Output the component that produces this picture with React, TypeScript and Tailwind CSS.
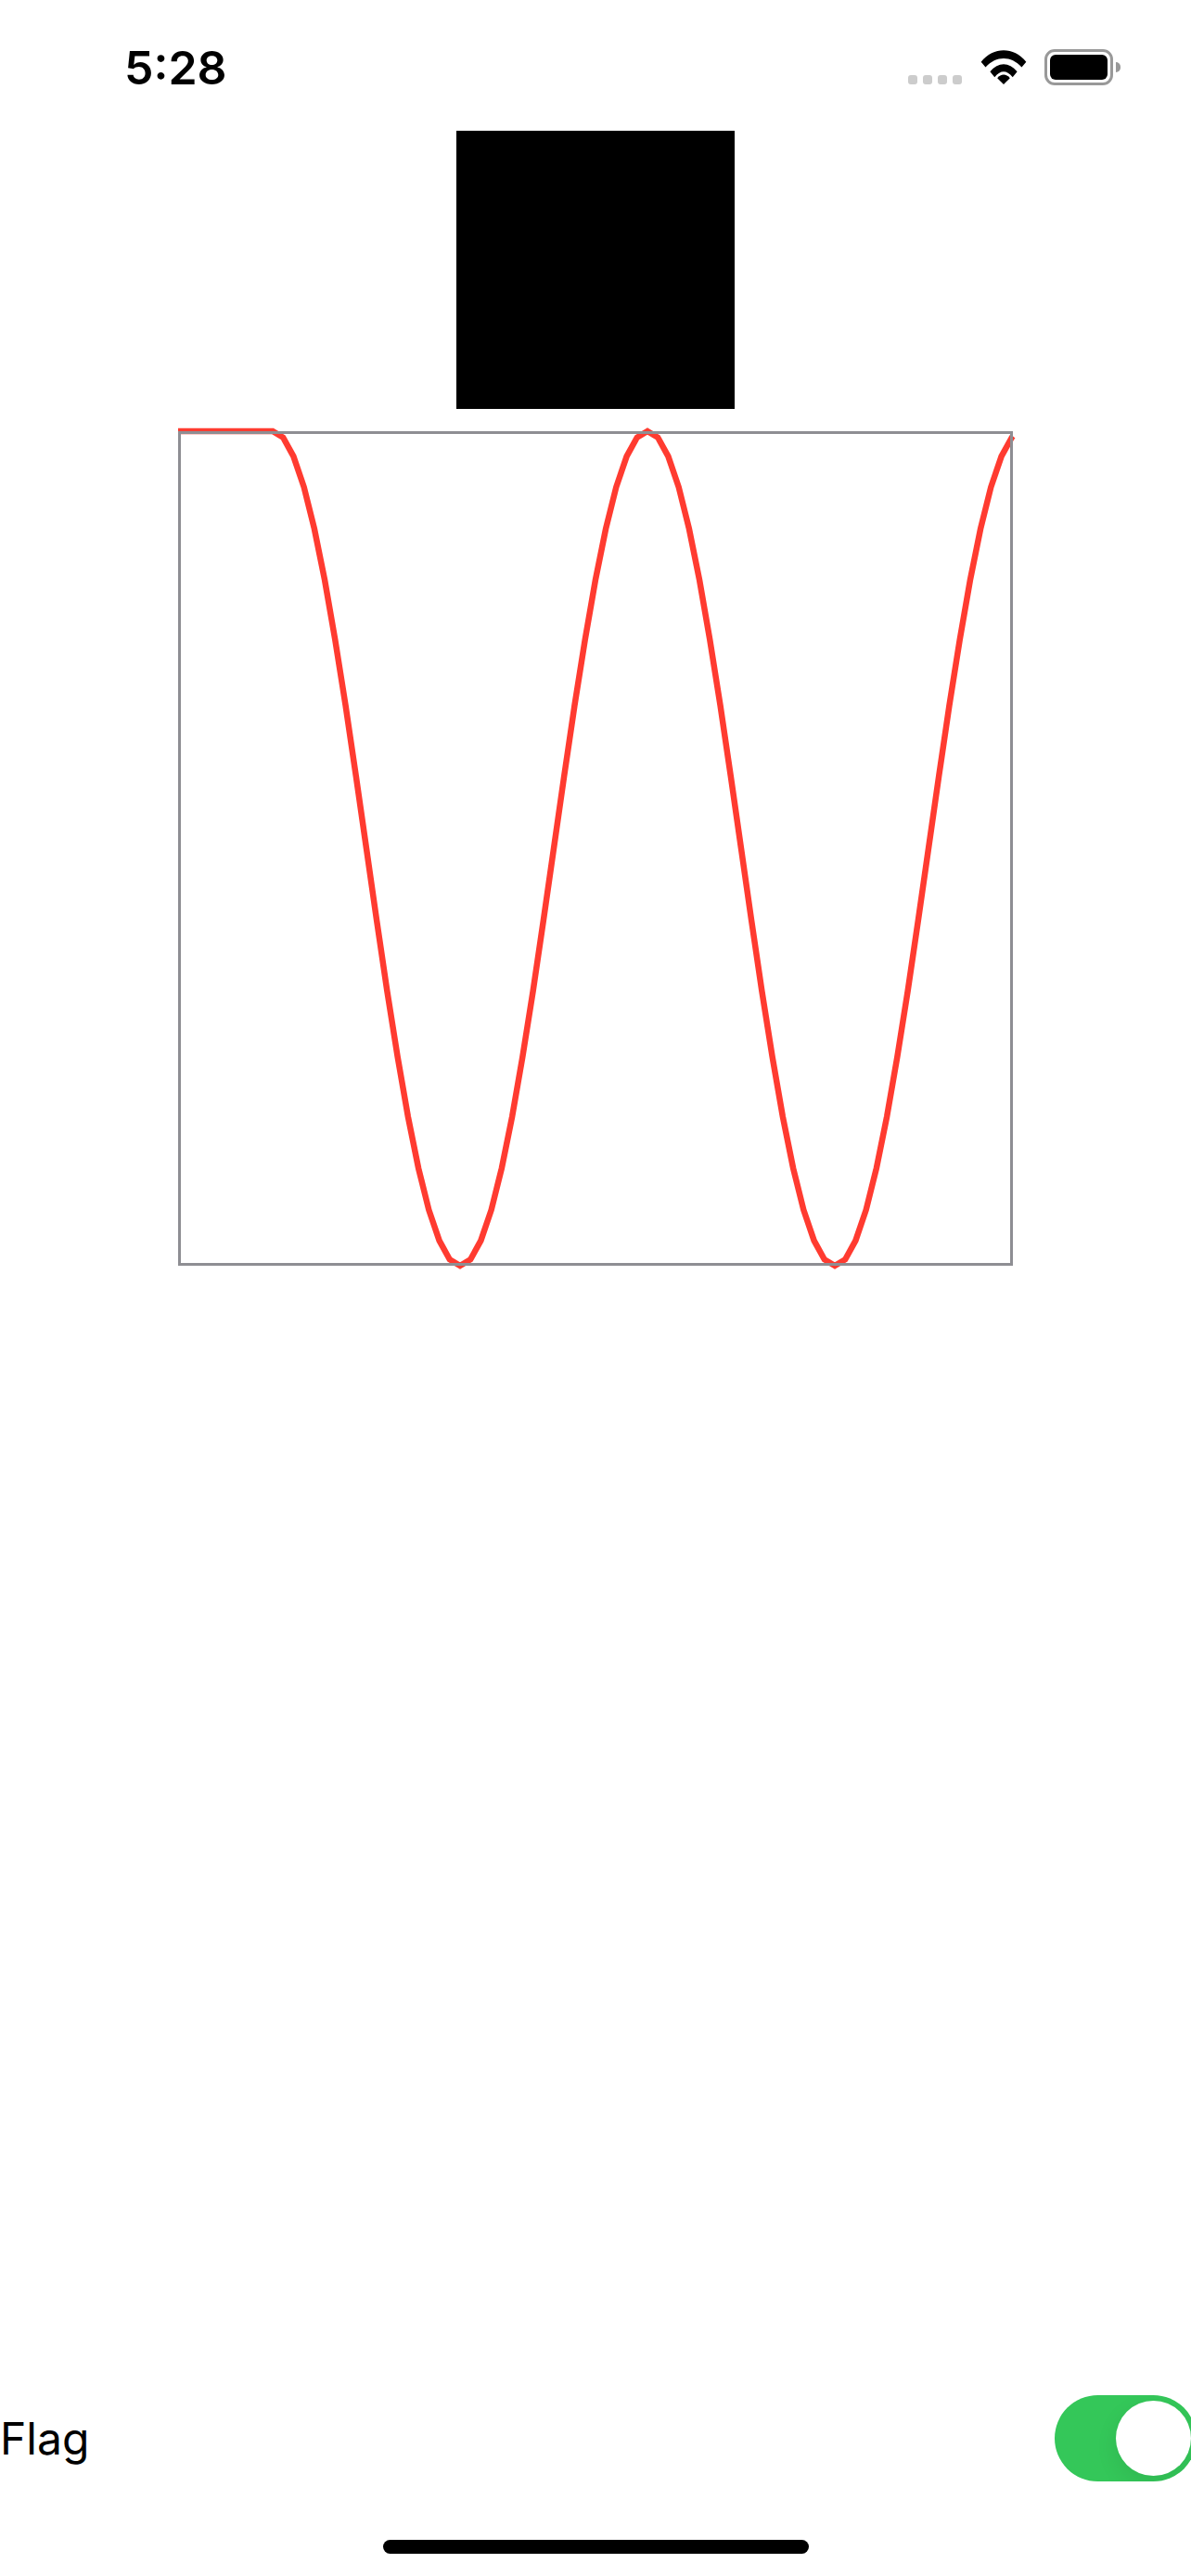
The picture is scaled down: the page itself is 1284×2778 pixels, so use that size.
const curvePoints = () => {
  const pts: number[][] = [[0, 0], [102, 0]];
  const mid = 450;
  const amp = 450;
  const step = 404 / 36;
  for (let i = 1; 102 + i * step < 900; i++) {
    const x = 102 + i * step;
    pts.push([x, mid - amp * Math.cos((2 * Math.PI * i * step) / 404)]);
  }
  pts.push([900, mid - amp * Math.cos((2 * Math.PI * 798) / 404)]);
  return pts.map(([x, y]) => `${x.toFixed(1)},${y.toFixed(1)}`).join(" ");
};

function StatusBar() {
  return (
    <div className="flex h-[141px] items-start justify-between pl-[134px] pr-[76px] pt-[46px]">
      <span className="mt-[1px] text-[50px] leading-[52px] font-semibold text-black font-['Inter',sans-serif]">5:28</span>
      <div className="flex items-end pt-[7px]">
        <div className="flex gap-[6px] mb-[1px] mr-[20px]">
          <span className="w-[10px] h-[10px] rounded-[3px] bg-[#cccccc]" />
          <span className="w-[10px] h-[10px] rounded-[3px] bg-[#cccccc]" />
          <span className="w-[10px] h-[10px] rounded-[3px] bg-[#cccccc]" />
          <span className="w-[10px] h-[10px] rounded-[3px] bg-[#cccccc]" />
        </div>
        <svg width="50" height="37" viewBox="0 0 50 38" className="mb-[1px] mr-[19px]">
          <path d="M0 13 C14 -4 36 -4 50 13 L45 19 C33 6 17 6 5 19 Z" fill="#000" />
          <path d="M10 24 C19 13 31 13 40 24 L35 30 C28 22 22 22 15 30 Z" fill="#000" />
          <path d="M18 31 C22 26 28 26 32 31 L25 38 Z" fill="#000" />
        </svg>
        <div className="w-[74px] h-[39px] rounded-[11px] border-[3px] border-[#999999] bg-white p-[3px]">
          <div className="w-full h-full rounded-[6px] bg-black" />
        </div>
        <span className="w-[5px] h-[11px] mb-[14px] ml-[3px] rounded-r-[5px] bg-[#999999]" />
      </div>
    </div>
  );
}

export default function App() {
  return (
    <div className="flex flex-col h-[2778px] w-[1284px] overflow-hidden bg-white font-['Inter',sans-serif]">
      <StatusBar />
      <div className="flex flex-col items-center">
        <div className="w-[300px] h-[300px] bg-black" />
        <div className="relative mt-[24px] w-[900px] h-[900px]">
          <svg width="900" height="900" viewBox="0 0 900 900" className="absolute left-0 top-0 overflow-visible">
            <polyline points={curvePoints()} fill="none" stroke="#ff3b30" strokeWidth="6.5" />
          </svg>
          <div className="absolute inset-0 border-[3px] border-[#8e8e93]" />
        </div>
      </div>
      <div className="flex-1" />
      <div className="flex items-center justify-between h-[93px]">
        <span className="text-[48px] leading-none text-black">Flag</span>
        <div className="relative w-[153px] h-[93px] mr-[-6px] rounded-full overflow-hidden bg-[#34c759] shrink-0">
          <span className="absolute right-[6px] top-[6px] w-[81px] h-[81px] rounded-full bg-white shadow-[0_9px_24px_rgba(0,0,0,0.08)]" />
        </div>
      </div>
      <div className="flex justify-center h-[102px] pt-[63px]">
        <div className="w-[459px] h-[15px] rounded-full bg-black" />
      </div>
    </div>
  );
}
